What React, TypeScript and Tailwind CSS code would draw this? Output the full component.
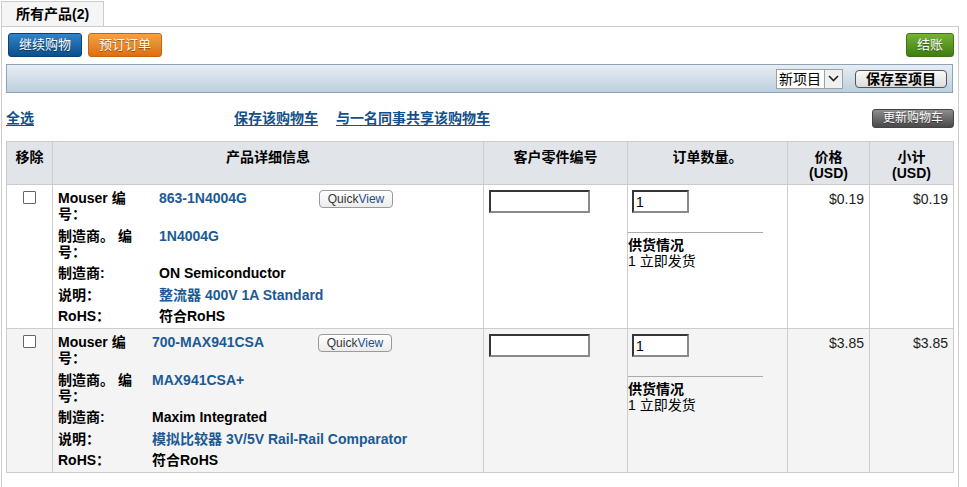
import React from 'react';

interface Product {
  id: string;
  mouserNo: string;
  mfrNo: string;
  mfr: string;
  desc: string;
  price: string;
  labelW: string;
  valueW: string;
}

const products: Product[] = [
  {
    id: '1',
    mouserNo: '863-1N4004G',
    mfrNo: '1N4004G',
    mfr: 'ON Semiconductor',
    desc: '整流器 400V 1A Standard',
    price: '$0.19',
    labelW: 'w-[101px]',
    valueW: 'w-[160px]',
  },
  {
    id: '2',
    mouserNo: '700-MAX941CSA',
    mfrNo: 'MAX941CSA+',
    mfr: 'Maxim Integrated',
    desc: '模拟比较器 3V/5V Rail-Rail Comparator',
    price: '$3.85',
    labelW: 'w-[94px]',
    valueW: 'w-[166px]',
  },
];

const font = { fontFamily: '"Liberation Sans", Arial, "Noto Sans CJK SC", sans-serif' };

function InfoRow({ label, labelW, children }: { label: string; labelW: string; children: React.ReactNode }) {
  return (
    <div className="flex pt-[3px] pb-[2.5px] leading-[16px]">
      <div className={`${labelW} shrink-0 font-bold text-black`}>
        <div className="w-[85px]">{label}</div>
      </div>
      <div className="font-bold whitespace-nowrap">{children}</div>
    </div>
  );
}

function ProductRow({ p, odd }: { p: Product; odd: boolean }) {
  const bg = odd ? 'bg-[#f4f4f4]' : 'bg-white';
  return (
    <tr className={`${bg} h-[144px] align-top`}>
      <td className="border border-[#cccccc] text-center pt-[6px]">
        <input
          type="checkbox"
          className="appearance-none w-[13px] h-[13px] border border-[#666] bg-white rounded-[1px] align-top"
        />
      </td>
      <td className="border border-[#cccccc] pl-[5px] pt-[2px] text-[14px]">
        <div className="flex items-start pt-[3px] pb-[2.5px] leading-[16px]">
          <div className={`${p.labelW} shrink-0 font-bold text-black`}>
            <div className="w-[85px]">Mouser 编号：</div>
          </div>
          <div className={`${p.valueW} shrink-0 font-bold text-[#1b5a94]`}>{p.mouserNo}</div>
          <button className="h-[18px] w-[74px] rounded-[4px] border border-[#9a9a9a] bg-gradient-to-b from-white to-[#ececec] text-[12px] leading-[16px] text-[#333]">
            Quick<span className="text-[#1b4f8a]">View</span>
          </button>
        </div>
        <InfoRow label="制造商。 编号：" labelW={p.labelW}>
          <span className="text-[#1b5a94]">{p.mfrNo}</span>
        </InfoRow>
        <InfoRow label="制造商:" labelW={p.labelW}>
          <span className="text-black">{p.mfr}</span>
        </InfoRow>
        <InfoRow label="说明：" labelW={p.labelW}>
          <span className="text-[#1b5a94]">{p.desc}</span>
        </InfoRow>
        <InfoRow label="RoHS：" labelW={p.labelW}>
          <span className="text-black">符合RoHS</span>
        </InfoRow>
      </td>
      <td className="border border-[#cccccc] pl-[5px] pt-[5px]">
        <input
          type="text"
          className="w-[101px] h-[23px] bg-white border-2 border-[#8a8a8a] [border-style:inset] outline-none"
        />
      </td>
      <td className="border border-[#cccccc] pt-[5px]">
        <div className="pl-[4px]">
          <input
            type="text"
            defaultValue="1"
            className="w-[57px] h-[23px] bg-white border-2 border-[#8a8a8a] [border-style:inset] outline-none px-[2px] text-[14px] text-black"
          />
        </div>
        <div className="mt-[19px] w-[135px] border-t border-[#aaaaaa]" />
        <div className="pt-[4px] text-[14px] leading-[16px] text-black">
          <div className="font-bold">供货情况</div>
          <div>1 立即发货</div>
        </div>
      </td>
      <td className="border border-[#cccccc] pr-[5px] pt-[6px] text-right text-[14px] leading-[16px] text-[#222]">{p.price}</td>
      <td className="border border-[#cccccc] pr-[5px] pt-[6px] text-right text-[14px] leading-[16px] text-[#222]">{p.price}</td>
    </tr>
  );
}

export default function App() {
  const th = 'border border-[#cccccc] bg-[#e1e4e9] font-bold text-[14px] leading-[16px] text-center align-top pt-[7px] text-black';
  return (
    <div className="w-[967px] h-[487px] overflow-hidden bg-white pl-[1px] pt-[1px] text-[14px]" style={font}>
      {/* Tab */}
      <div className="flex">
        <div className="w-[103px] h-[25px] border border-b-0 border-[#cccccc] bg-[#f5f5f5] font-bold text-[14px] leading-[24px] pl-[14px] text-black">
          所有产品(2)
        </div>
      </div>

      {/* Panel */}
      <div className="w-[958px] h-[470px] border border-b-0 border-[#cccccc] px-[4px] pt-[5px]">
        {/* Buttons */}
        <div className="flex items-center h-[25px] pl-[2px]">
          <button className="w-[74px] h-[24px] rounded-[3px] border border-[#0a4275] bg-gradient-to-b from-[#3283c8] to-[#0a4f8d] text-white text-[13px] [text-shadow:0_1px_1px_rgba(0,0,0,0.5)]">
            继续购物
          </button>
          <button className="ml-[6px] w-[74px] h-[24px] rounded-[3px] border border-[#c8650c] bg-gradient-to-b from-[#f5a144] to-[#df6e0c] text-white text-[13px] [text-shadow:0_1px_1px_rgba(0,0,0,0.4)]">
            预订订单
          </button>
          <button className="ml-auto w-[48px] h-[24px] rounded-[3px] border border-[#3d7512] bg-gradient-to-b from-[#74b332] to-[#3e7e10] text-white text-[13px] [text-shadow:0_1px_1px_rgba(0,0,0,0.4)]">
            结账
          </button>
        </div>

        {/* Blue bar */}
        <div className="mt-[7px] w-[947px] h-[29px] border border-[#8ea3b8] bg-gradient-to-b from-[#e7edf3] to-[#bccfde] flex items-center justify-end pr-[5px]">
          <div className="flex h-[20px] w-[67px] border border-[#a0a0a0] bg-white">
            <span className="flex-1 text-[14px] leading-[18px] pl-[2px] text-black">新项目</span>
            <span className="w-[18px] h-[18px] border-l border-[#a0a0a0] bg-[#f0f0f0] flex items-center justify-center">
              <svg width="11" height="7" viewBox="0 0 11 7">
                <path d="M1 1 L5.5 5.5 L10 1" fill="none" stroke="#222" strokeWidth="1.6" />
              </svg>
            </span>
          </div>
          <button className="ml-[12px] w-[92px] h-[18px] rounded-[4px] border border-[#555] bg-gradient-to-b from-[#fafafa] to-[#dcdcdc] font-bold text-[14px] leading-[16px] text-black">
            保存至项目
          </button>
        </div>

        {/* Links row */}
        <div className="flex items-center h-[48px] pt-[2px]">
          <a className="font-bold text-[14px] text-[#14508a] underline underline-offset-2 cursor-pointer">全选</a>
          <a className="ml-[200px] font-bold text-[14px] text-[#14508a] underline underline-offset-2 cursor-pointer">保存该购物车</a>
          <a className="ml-[18px] font-bold text-[14px] text-[#14508a] underline underline-offset-2 cursor-pointer">与一名同事共享该购物车</a>
          <button className="ml-auto w-[82px] h-[19px] rounded-[3px] border border-[#444] bg-gradient-to-b from-[#8e8e8e] to-[#4a4a4a] text-white text-[12px] leading-[17px] [text-shadow:0_1px_1px_rgba(0,0,0,0.5)]">
            更新购物车
          </button>
        </div>

        {/* Table */}
        <table className="w-[947px] border-collapse table-fixed">
          <colgroup>
            <col className="w-[46px]" />
            <col className="w-[431px]" />
            <col className="w-[144px]" />
            <col className="w-[160px]" />
            <col className="w-[82px]" />
            <col className="w-[84px]" />
          </colgroup>
          <thead>
            <tr className="h-[43px]">
              <th className={th}>移除</th>
              <th className={th}>产品详细信息</th>
              <th className={th}>客户零件编号</th>
              <th className={th}>订单数量。</th>
              <th className={th}>
                价格
                <br />
                (USD)
              </th>
              <th className={th}>
                小计
                <br />
                (USD)
              </th>
            </tr>
          </thead>
          <tbody>
            {products.map((p, i) => (
              <ProductRow key={p.id} p={p} odd={i % 2 === 1} />
            ))}
          </tbody>
        </table>
      </div>
    </div>
  );
}
